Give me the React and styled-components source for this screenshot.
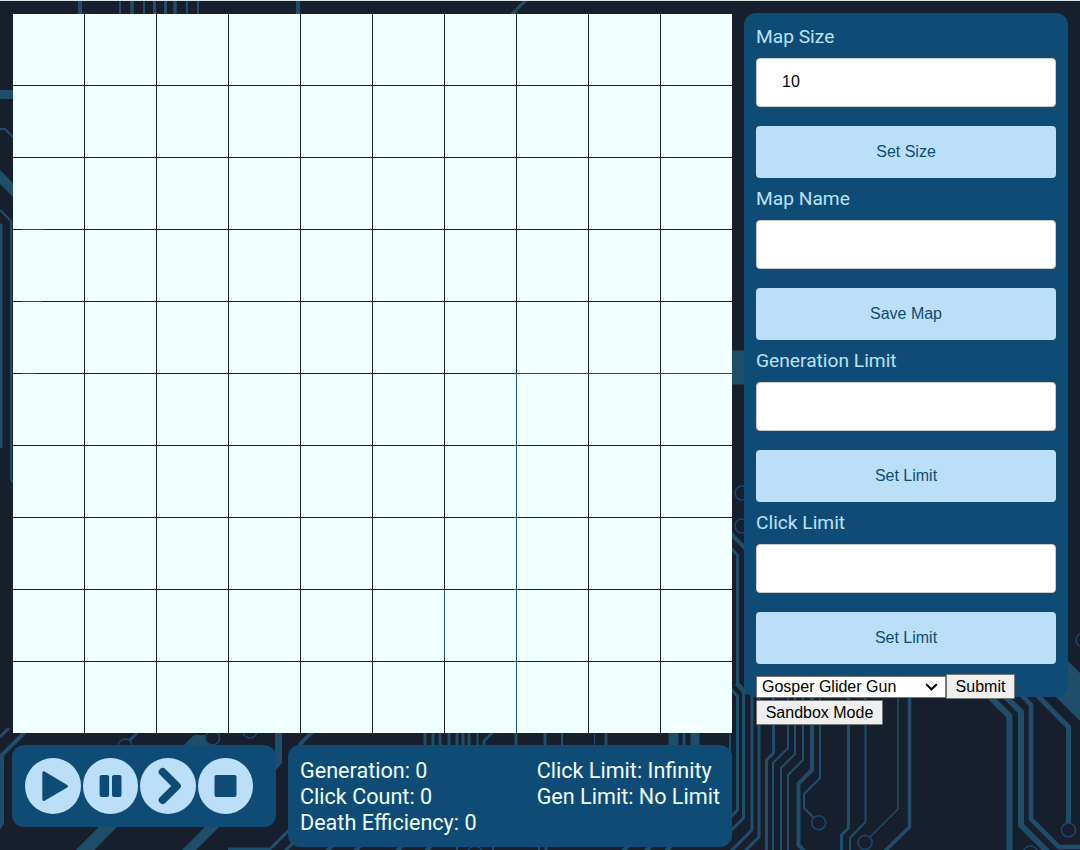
import React from "react";
import styled, { createGlobalStyle } from "styled-components";

const GlobalStyle = createGlobalStyle`
  *, *::before, *::after { box-sizing: border-box; }
  html, body { margin: 0; height: 100%; overflow: hidden; }
  body { background: #181f2c; font-family: Roboto, sans-serif; }
`;

const Page = styled.div`
  position: relative;
  isolation: isolate;
  width: 1080px;
  height: 850px;
  overflow: hidden;
  border-top: 1px solid #d9e2e5;
  display: flex;
  align-items: flex-start;
  gap: 12px;
  padding: 12px;
`;

const Backdrop = styled.svg`
  position: absolute;
  z-index: -1;
  left: 0;
  top: -1px;
  width: 1080px;
  height: 850px;
`;

const Main = styled.main`
  width: 720px;
  display: flex;
  flex-direction: column;
`;

const Board = styled.div`
  display: grid;
  grid-template-columns: repeat(10, 71px);
  grid-auto-rows: 71px;
  gap: 1px;
  margin: 1px 0 12px 1px;
`;

const Cell = styled.div`
  background: #f0ffff;
`;

const Footer = styled.div`
  display: flex;
  align-items: flex-start;
  gap: 12px;
`;

const Panel = styled.div`
  background: #0f4c75;
  border-radius: 12px;
  padding: 12px;
`;

const Controls = styled(Panel)`
  width: 264px;
  height: 82px;
  display: flex;
  gap: 2px;
  padding: 13px;
`;

const RoundButton = styled.button`
  width: 55.6px;
  height: 56px;
  flex: none;
  padding: 0;
  border: 0;
  border-radius: 50%;
  background: #bbdff9;
  color: #0f4c75;

  svg { display: block; }
`;

const Stats = styled(Panel)`
  width: 444px;
  height: 102px;
  display: flex;
  justify-content: space-between;
  padding-top: 13px;
  color: #f0ffff;
  font-size: 21.6px;
  line-height: 26px;
`;

const Sidebar = styled(Panel)`
  width: 324px;
  height: 684px;
`;

const Field = styled.div`
  display: flex;
  flex-direction: column;
  height: 162px;
`;

const Label = styled.label`
  height: 23px;
  margin-bottom: 10px;
  color: #bbe1fa;
  font-size: 19.2px;
  line-height: 23px;
`;

const TextInput = styled.input`
  height: 49px;
  margin: 0 0 19px;
  padding: 0 25px 2px;
  border: 1px solid #ccc;
  border-radius: 4px;
  background: #fff;
  color: #000;
  font: 16px "Liberation Sans", Arial, sans-serif;
`;

const WideButton = styled.button`
  height: 52px;
  padding: 0;
  border: 0;
  border-radius: 4px;
  background: #bbdff9;
  color: #0f4c75;
  font: 16px "Liberation Sans", Arial, sans-serif;
`;

const PresetRow = styled.div`
  display: flex;
  align-items: center;
  height: 27px;
`;

const SelectBox = styled.div`
  display: grid;
  align-items: center;
  width: 190px;
  height: 22px;

  > * { grid-area: 1 / 1; }

  svg {
    justify-self: end;
    margin-right: 8px;
    pointer-events: none;
  }
`;

const Select = styled.select`
  appearance: none;
  width: 190px;
  height: 22px;
  padding: 0 5px;
  border: 1px solid #767676;
  border-radius: 0;
  background: #fff;
  color: #000;
  font: 16px "Liberation Sans", Arial, sans-serif;
`;

const SmallButton = styled.button`
  display: block;
  width: ${(p) => p.$width}px;
  height: 25px;
  padding: 0 0 1px;
  border: 1px solid #767676;
  border-radius: 1px;
  background: #efefef;
  color: #000;
  font: 16px/19px "Liberation Sans", Arial, sans-serif;
`;

// Each trace: [line width, polyline points]
const traces = [
  [4, "80,0 80,14"], [2, "120,0 120,14"], [3.5, "132,0 132,14"], [2, "144,0 144,14"],
  [3, "154.5,0 154.5,14"], [3, "165.5,0 165.5,14"], [3.5, "175,0 175,14"],
  [2, "187,0 187,14"], [2, "198,0 198,14"], [4, "298,0 298,14"], [3, "511,15 526,0"],
  [9, "0,94.5 13,94.5"], [2, "0,129 5,129 14,138"], [10, "-5,172 20,197"],
  [2, "0,210 11,221 11,480 16,485"], [3, "0,224 1,226 1,446 0,448"],
  [1, "22,229.5 44,229.5"], [1, "22,301.5 42,301.5"], [1, "22,373.5 36,373.5"],
  [3, "516,373 516,745"], [3, "444,590 444,660"],
  [1, "516,373.5 732,373.5"], [34, "732,367.5 744,367.5"],
  [3, "0,737 9,728"], [4, "-1,828 2,823 2,755 27,730"], [3, "129,741 141,729"],
  [7, "278.5,730 278.5,762 272,769"], [13, "112,823 78,857"], [10, "216,823 182,857"],
  [3, "228,849 270,849 292,827"], [4, "299,748 301,743 313,731"],
  [3, "425,732 425,746"], [3, "433,732 433,746"], [3, "440,732 440,746"],
  [3, "449,732 449,746"], [3, "457,732 457,746"], [3, "463,732 463,746"],
  [3, "469,732 469,746"], [2, "477.5,732 477.5,746"], [3, "484,747 484,741 494,731"],
  [3, "545,732 545,746"], [2, "562,732 562,746"], [1, "594.5,734 594.5,746"],
  [3, "606,732 606,746"], [10, "673.5,732 673.5,746"], [3, "684,732 684,746"],
  [9, "695,732 695,746"], [2, "730,732 730,760"],
  [4, "730,533 746,549"], [3, "730,547 737.5,555 737.5,683 748,694"],
  [3, "730,688 737.5,696 737.5,810 728,820"],
  [3, "736,684 743.5,692 743.5,818 718,844"],
  [3, "752,690 752,830 730,852"], [3, "759,690 759,837 743,853"],
  [3, "773.5,690 773.5,753 766.5,760 766.5,852"],
  [2, "788,690 788,748 773,763 773,852"], [2, "795,690 795,754 781,768 781,852"],
  [2, "803,690 803,760 788,775 788,852"],
  [4, "812,690 812,770 798.5,783.5 798.5,845 805,852"],
  [2, "820,690 820,778 804,794 804,808 814,818"],
  [3, "848.5,690 848.5,828 841.5,835 841.5,852"],
  [2, "865.5,690 865.5,822 850,838 850,852"], [1.5, "898,690 898,809 870,837"],
  [3.5, "909.5,690 909.5,827 884,852"],
  [6, "984,691 1009.5,716 1009.5,852"], [6, "999,690 1021,712 1021,825 1048,852"],
  [4.5, "1017,690 1031,705 1031,819 1059,847 1082,847"],
  [5, "1032,690 1068.5,727 1068.5,823"],
  [3, "284,852 300,836"], [4, "326,852 342,836"], [4, "354,852 370,836"],
  [4, "396,852 412,836"], [4, "425,852 435,842"], [4, "622,852 632,842"],
  [4, "645,852 655,842"], [4, "665,852 675,842"], [2, "457,846 457,852"],
  [2, "493,846 493,852"], [2, "539,846 539,852"], [3, "546,846 546,852"],
];

const pads = [
  [125, 746, 7], [212.5, 738, 7], [250, 731, 7], [742, 493, 7], [742, 526, 7],
  [818.7, 822.7, 7], [865, 842.5, 7], [1068.5, 830, 7], [1030.5, 853, 7],
  [1083, 640, 7], [475, 853, 7],
];

const Circuit = () => (
  <Backdrop viewBox="0 0 1080 850" aria-hidden="true">
    <g fill="none" stroke="#1f4e6b">
      {traces.map(([width, points], i) => (
        <polyline key={i} points={points} strokeWidth={width} />
      ))}
    </g>
    <path d="M183 746 194 735H212V746Z M1068 661 1080 673V721L1050 691Z" fill="#1f4e6b" />
    <g fill="#181f2c" stroke="#1c4569" strokeWidth="1.6">
      {pads.map(([cx, cy, r], i) => (
        <circle key={i} cx={cx} cy={cy} r={r} />
      ))}
    </g>
  </Backdrop>
);

const controls = [
  {
    name: "Play",
    shape: <path d="M18.8 14.8 41.5 28.2 18.8 41.5Z" fill="currentColor" stroke="currentColor" strokeWidth="3" strokeLinejoin="round" />,
  },
  {
    name: "Pause",
    shape: (
      <g fill="currentColor">
        <rect x="16.6" y="17" width="9.5" height="22" rx="2" />
        <rect x="29" y="17" width="9.5" height="22" rx="2" />
      </g>
    ),
  },
  {
    name: "Step",
    shape: <path d="M22.7 14 36.8 28 22.7 42" fill="none" stroke="currentColor" strokeWidth="8" strokeLinecap="round" strokeLinejoin="round" />,
  },
  {
    name: "Stop",
    shape: <rect x="16.5" y="17" width="22" height="22" rx="2" fill="currentColor" />,
  },
];

const fields = [
  { label: "Map Size", value: "10", action: "Set Size" },
  { label: "Map Name", value: "", action: "Save Map" },
  { label: "Generation Limit", value: "", action: "Set Limit" },
  { label: "Click Limit", value: "", action: "Set Limit" },
];

export default function App() {
  return (
    <>
      <GlobalStyle />
      <Page>
        <Circuit />
        <Main>
          <Board>
            {Array.from({ length: 100 }, (_, i) => <Cell key={i} />)}
          </Board>
          <Footer>
            <Controls>
              {controls.map(({ name, shape }) => (
                <RoundButton key={name} aria-label={name}>
                  <svg width="56" height="56" viewBox="0 0 56 56">{shape}</svg>
                </RoundButton>
              ))}
            </Controls>
            <Stats>
              <div>
                <div>Generation: 0</div>
                <div>Click Count: 0</div>
                <div>Death Efficiency: 0</div>
              </div>
              <div>
                <div>Click Limit: Infinity</div>
                <div>Gen Limit: No Limit</div>
              </div>
            </Stats>
          </Footer>
        </Main>
        <Sidebar>
          {fields.map(({ label, value, action }) => (
            <Field key={label}>
              <Label>{label}</Label>
              <TextInput defaultValue={value} aria-label={label} />
              <WideButton>{action}</WideButton>
            </Field>
          ))}
          <PresetRow>
            <SelectBox>
              <Select defaultValue="Gosper Glider Gun">
                <option>Gosper Glider Gun</option>
              </Select>
              <svg width="13" height="8" viewBox="0 0 13 8">
                <path d="M1.2 1.2 6.5 6.3 11.8 1.2" fill="none" stroke="#000" strokeWidth="2" />
              </svg>
            </SelectBox>
            <SmallButton $width={69}>Submit</SmallButton>
          </PresetRow>
          <SmallButton $width={127}>Sandbox Mode</SmallButton>
        </Sidebar>
      </Page>
    </>
  );
}
